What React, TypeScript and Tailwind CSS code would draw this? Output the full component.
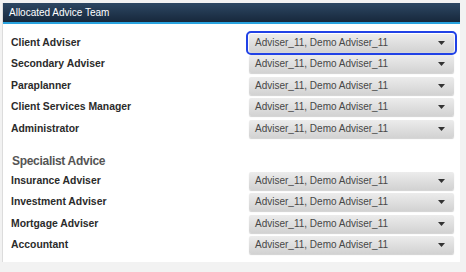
import React from "react";

const Caret = () => (
  <svg width="7" height="4" viewBox="0 0 7 4" className="shrink-0">
    <path d="M0 0 L7 0 L3.5 4 Z" fill="#333" />
  </svg>
);

const Select = ({ focused }: { focused?: boolean }) => (
  <div
    className={
      "w-[205px] h-[18px] rounded-[2px] flex items-center justify-between pl-[6px] pr-[9px] bg-gradient-to-b from-[#ececec] to-[#d2d2d2] shadow-[0_1px_1px_rgba(0,0,0,0.18)] " +
      (focused ? "outline outline-2 outline-[#2142e6] outline-offset-[1px]" : "")
    }
  >
    <span className="text-[10px] text-[#474747] leading-none">Adviser_11, Demo Adviser_11</span>
    <Caret />
  </div>
);

const Row = ({ label, focused }: { label: string; focused?: boolean }) => (
  <div className="h-[21.5px] flex items-center justify-between pl-[8px] pr-[6px]">
    <span className="text-[10.4px] font-bold text-[#2b2b2b] leading-none">{label}</span>
    <Select focused={focused} />
  </div>
);

export default function App() {
  return (
    <div
      className="w-[466px] h-[272px] bg-[#f2f2f2] pt-[3px] overflow-hidden"
      style={{ fontFamily: '"Liberation Sans", Arial, sans-serif' }}
    >
      <div className="ml-[2px] w-[458px] h-[259px] bg-white border-l border-[#dcdcdc] flex flex-col">
        <div className="h-[19px] bg-gradient-to-b from-[#2d4763] to-[#17283c] flex items-center pl-[6px]">
          <span className="text-[10px] text-white leading-none">Allocated Advice Team</span>
        </div>
        <div className="h-[2px] bg-[#29a3df]" />
        <div className="pt-[8px] flex flex-col">
          <Row label="Client Adviser" focused />
          <Row label="Secondary Adviser" />
          <Row label="Paraplanner" />
          <Row label="Client Services Manager" />
          <Row label="Administrator" />
          <div className="h-[30.5px] flex items-end pb-[3px] pl-[9px]">
            <span className="text-[12px] font-bold tracking-[-0.3px] text-[#555] leading-none">Specialist Advice</span>
          </div>
          <Row label="Insurance Adviser" />
          <Row label="Investment Adviser" />
          <Row label="Mortgage Adviser" />
          <Row label="Accountant" />
        </div>
      </div>
    </div>
  );
}
